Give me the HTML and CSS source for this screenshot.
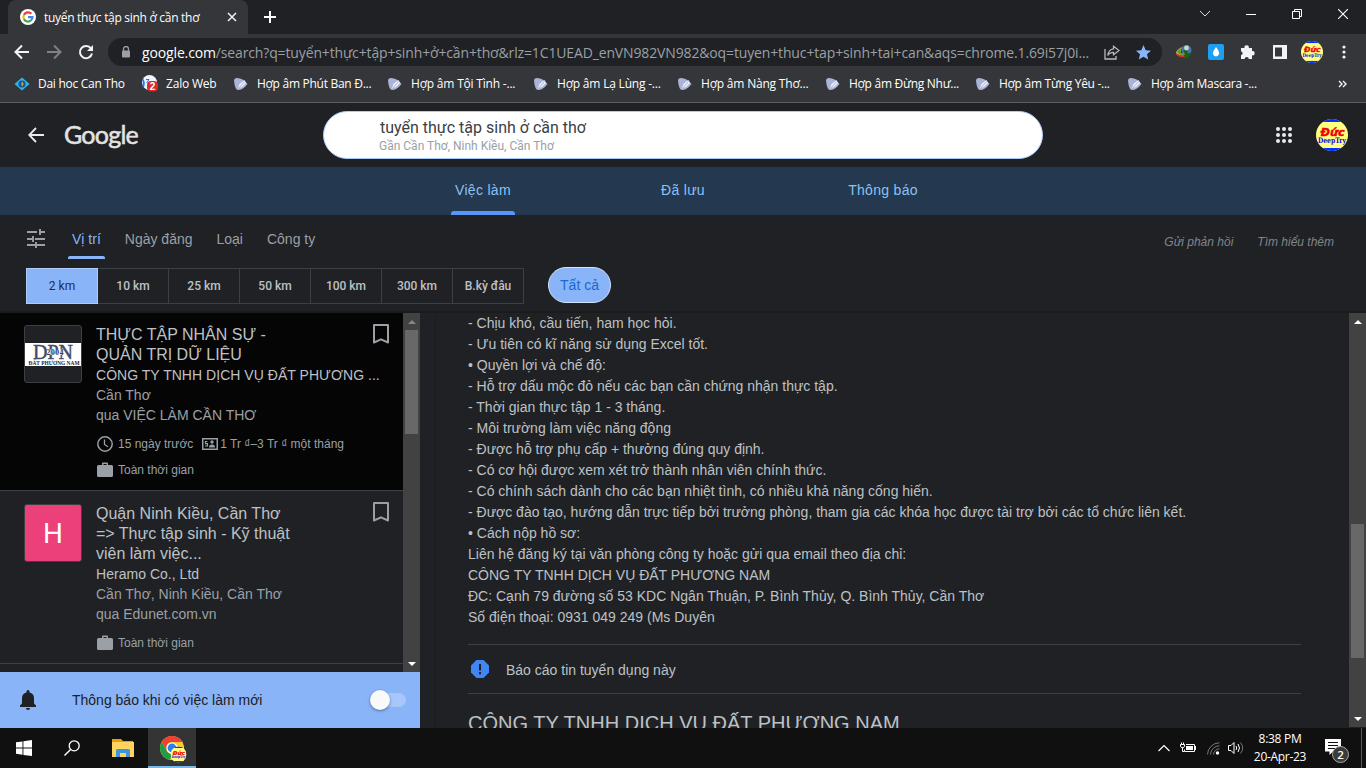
FILE: index.html
```html
<!DOCTYPE html>
<html lang="vi">
<head>
<meta charset="utf-8">
<title>tuyển thực tập sinh ở cần thơ</title>
<link rel="stylesheet" href="styles.css">
</head>
<body>
<svg class="defs" aria-hidden="true">
  <defs>
    <symbol id="pick" viewBox="0 0 16 16"><path d="M1 5Q1 2 4 2Q10 2 14.500 8Q10 14 5 14Q2 14 1 5Z" fill="#a9b4d6"/><path d="M5 12.500L6.500 8L11.500 4L13 7L9 11Z" fill="#eef1fa"/><path d="M6 12L11.500 5.500" stroke="#8a95bd" stroke-width=".7"/></symbol>
    <symbol id="avatar" viewBox="0 0 32 32"><clipPath id="round"><circle cx="16" cy="16" r="16"/></clipPath><g clip-path="url(#round)"><rect width="32" height="32" fill="#ffff80"/><rect width="32" height="3" fill="#0030ff"/><rect y="29" width="32" height="3" fill="#0030ff"/><text x="4.500" y="16.500" textLength="24" lengthAdjust="spacingAndGlyphs" font-family="DejaVu Sans" font-size="10.500" font-weight="700" font-style="italic" fill="#f00000" stroke="#f00000" stroke-width=".4">Đức</text><text x="2" y="23.500" textLength="28" lengthAdjust="spacingAndGlyphs" font-family="DejaVu Serif" font-size="7.500" font-weight="700" fill="#2000f0">DeepTry</text></g></symbol>
    <symbol id="case" viewBox="0 0 16 16"><path d="M5 3V1.500Q5 .5 6 .5H10Q11 .5 11 1.500V3H14.500Q16 3 16 4.500V13.500Q16 15 14.500 15H1.500Q0 15 0 13.500V4.500Q0 3 1.500 3ZM6.500 3H9.500V2H6.500Z" fill="#9aa0a6" fill-rule="evenodd"/></symbol>
    <symbol id="mark" viewBox="0 0 16 20"><path d="M1 1H15V18.500L8 15.300L1 18.500Z" fill="none" stroke="#9aa0a6" stroke-width="2" stroke-linejoin="round"/></symbol>
  </defs>
</svg>

<div class="strip">
  <div class="tab">
    <svg class="fav" width="16" height="16" viewBox="0 0 16 16"><circle cx="8" cy="8" r="8" fill="#fff"/><g fill="none" stroke-width="2.200"><path d="M11.400 4.800A4.600 4.600 0 0 0 3.900 6" stroke="#ea4335"/><path d="M3.900 6A4.600 4.600 0 0 0 3.900 10.100" stroke="#fbbc05"/><path d="M3.900 10.100A4.600 4.600 0 0 0 10.900 11.500" stroke="#34a853"/><path d="M8 8.100H12.500A4.600 4.600 0 0 1 10.900 11.500" stroke="#4285f4"/></g></svg>
    <span class="tab-title">tuyển thực tập sinh ở cần thơ</span>
    <svg class="tab-x" width="10" height="10" viewBox="0 0 10 10"><path d="M1 1L9 9M9 1L1 9" stroke="#f1f3f4" stroke-width="1.500"/></svg>
  </div>
  <svg class="plus" width="12" height="12" viewBox="0 0 12 12"><path d="M6 0V12M0 6H12" stroke="#fff" stroke-width="2"/></svg>
  <div class="win">
    <svg width="12" height="12" viewBox="0 0 12 12"><path d="M1 3L6 8L11 3" fill="none" stroke="#ddd"/></svg>
    <svg width="10" height="12" viewBox="0 0 10 12"><path d="M0 6.500H10" stroke="#fff"/></svg>
    <svg width="10" height="10" viewBox="0 0 10 10"><path d="M.5 2.500H7.500V9.500H.5ZM2.500 2.500V.5H9.500V7.500H7.500" fill="none" stroke="#fff"/></svg>
    <svg width="10" height="10" viewBox="0 0 10 10"><path d="M0 0L10 10M10 0L0 10" stroke="#fff" stroke-width="1.100"/></svg>
  </div>
</div>

<div class="toolbar">
  <svg class="nav-back" width="16" height="16" viewBox="0 0 16 16"><path d="M15 8H2M8 1.500L1.500 8L8 14.500" fill="none" stroke="#f1f3f4" stroke-width="2"/></svg>
  <svg class="nav-fwd" width="16" height="16" viewBox="0 0 16 16"><path d="M1 8H14M8 1.500L14.500 8L8 14.500" fill="none" stroke="#808184" stroke-width="2"/></svg>
  <svg class="nav-load" width="16" height="16" viewBox="0 0 16 16"><path d="M13 4.500A6.100 6.100 0 1 0 14 9.500" fill="none" stroke="#f1f3f4" stroke-width="2"/><path d="M15 1V7H9Z" fill="#f1f3f4"/></svg>
  <div class="omni">
    <svg width="10" height="12" viewBox="0 0 10 12"><path d="M2.500 5V3A2.500 2.500 0 0 1 7.500 3V5" fill="none" stroke="#9aa0a6" stroke-width="1.300"/><rect x="1" y="4.500" width="8" height="7" rx="1" fill="#9aa0a6"/></svg>
    <span class="url"><b>google.com</b>/search?q=tuyển+thực+tập+sinh+ở+cần+thơ&amp;rlz=1C1UEAD_enVN982VN982&amp;oq=tuyen+thuc+tap+sinh+tai+can&amp;aqs=chrome.1.69i57j0i...</span>
    <svg class="share" width="16" height="15" viewBox="0 0 16 15"><path d="M1 4V14H12V11" fill="none" stroke="#b8babd" stroke-width="1.300"/><path d="M9.500 1.200L15 5.500L9.500 9.800V7.300Q5.500 7.300 3.800 10.500Q4.500 4.500 9.500 3.800Z" fill="none" stroke="#b8babd" stroke-width="1.200"/></svg>
    <svg width="15" height="15" viewBox="0 0 15 15"><path d="M7.500 0L9.700 5.200L15 5.700L11 9.200L12.200 14.500L7.500 11.700L2.800 14.500L4 9.200L0 5.700L5.300 5.200Z" fill="#8ab4f8"/></svg>
  </div>
  <div class="ext">
    <svg width="16" height="16" viewBox="0 0 16 16"><circle cx="10.500" cy="6" r="5" fill="#4a72ad"/><circle cx="10.500" cy="4" r="2.400" fill="#c9dcc9"/><path d="M6 3Q0 6 0 9Q1 13 9 12L8 9.500Q5 10 4.500 8Z" fill="#e0b02a"/><path d="M0 9Q2 14.500 10 13L9 11Q4 12 0 9Z" fill="#d2352e"/><path d="M1 7.500Q3 5 5 4L4.500 8Q5 10 8 9.500V11Q3 11.500 1 7.500Z" fill="#5a9a35"/><path d="M7 6.500H11L12 9.500L16 8.500L11 15.500L7.500 11H9.500Z" fill="#14650c"/></svg>
    <svg width="16" height="16" viewBox="0 0 16 16"><rect width="16" height="16" rx="2" fill="#1ca0f2"/><path d="M8 3Q12 8 11 10.300A3.200 3.200 0 0 1 5 10.300Q4.300 8 8 3Z" fill="#fff"/></svg>
    <svg width="16" height="16" viewBox="0 0 16 16"><path d="M1 4H4.500A2.200 2.200 0 1 1 8.800 4H12V7A2.200 2.200 0 1 1 12 11.300V15H8.800A2.100 2.100 0 0 0 4.600 15H1V11.300A2.100 2.100 0 0 0 1 7.200Z" fill="#f1f3f4"/></svg>
    <svg width="14" height="14" viewBox="0 0 14 14"><path d="M0 0H14V14H0ZM2 2.500V11.500H9V2.500Z" fill="#f1f3f4" fill-rule="evenodd"/></svg>
    <svg width="22" height="22"><use href="#avatar"/></svg>
    <svg width="4" height="14" viewBox="0 0 4 14"><g fill="#f1f3f4"><circle cx="2" cy="2" r="1.600"/><circle cx="2" cy="7" r="1.600"/><circle cx="2" cy="12" r="1.600"/></g></svg>
  </div>
</div>

<div class="bookmarks">
  <span class="bm"><svg width="16" height="16" viewBox="0 0 16 16"><path d="M8 1.500L15.500 8L8 14.500L.5 8Z" fill="#2fb6e3"/><circle cx="8" cy="8" r="3.600" fill="#14549b"/><path d="M8 5.500Q11 8 8 10.500Q6.500 8 8 5.500Z" fill="#d2a44c"/></svg><span>Dai hoc Can Tho</span></span>
  <span class="bm"><svg width="17" height="17" viewBox="0 0 17 17"><circle cx="7.500" cy="7.500" r="7.500" fill="#eef4ff"/><path d="M.5 4Q3 8 1 12" stroke="#2577e8" stroke-width="1.800" fill="none"/><path d="M4 4.500H7L4.500 8" stroke="#2577e8" fill="none"/><rect x="5" y="6" width="11" height="10.500" rx="4" fill="#d92b2b"/><text x="10.500" y="15" text-anchor="middle" font-family="Liberation Sans" font-size="10" font-weight="700" fill="#fff">2</text></svg><span>Zalo Web</span></span>
  <span class="bm"><svg width="16" height="16"><use href="#pick"/></svg><span>Hợp âm Phút Ban Đ...</span></span>
  <span class="bm"><svg width="16" height="16"><use href="#pick"/></svg><span>Hợp âm Tội Tình -...</span></span>
  <span class="bm"><svg width="16" height="16"><use href="#pick"/></svg><span>Hợp âm Lạ Lùng -...</span></span>
  <span class="bm"><svg width="16" height="16"><use href="#pick"/></svg><span>Hợp âm Nàng Thơ...</span></span>
  <span class="bm"><svg width="16" height="16"><use href="#pick"/></svg><span>Hợp âm Đừng Như...</span></span>
  <span class="bm"><svg width="16" height="16"><use href="#pick"/></svg><span>Hợp âm Từng Yêu -...</span></span>
  <span class="bm"><svg width="16" height="16"><use href="#pick"/></svg><span>Hợp âm Mascara -...</span></span>
  <svg class="more" width="9" height="8" viewBox="0 0 9 8"><path d="M1 1L4 4L1 7M5 1L8 4L5 7" fill="none" stroke="#f1f3f4" stroke-width="1.400"/></svg>
</div>

<header class="head">
  <svg class="h-back" width="16" height="16" viewBox="0 0 16 16"><path d="M16 8H1.500M8 1L1.200 8L8 15" fill="none" stroke="#e8eaed" stroke-width="1.800"/></svg>
  <span class="logo">Google</span>
  <div class="search">
    <div class="query">tuyển thực tập sinh ở cần thơ</div>
    <div class="near">Gần Cần Thơ, Ninh Kiều, Cần Thơ</div>
  </div>
  <svg class="apps" width="16" height="16" viewBox="0 0 16 16"><g fill="#e8eaed"><circle cx="2" cy="2" r="2"/><circle cx="8" cy="2" r="2"/><circle cx="14" cy="2" r="2"/><circle cx="2" cy="8" r="2"/><circle cx="8" cy="8" r="2"/><circle cx="14" cy="8" r="2"/><circle cx="2" cy="14" r="2"/><circle cx="8" cy="14" r="2"/><circle cx="14" cy="14" r="2"/></g></svg>
  <svg class="me" width="32" height="32"><use href="#avatar"/></svg>
</header>

<nav class="tabs">
  <a class="on">Việc làm</a><a>Đã lưu</a><a>Thông báo</a>
</nav>

<section class="filters">
  <div class="frow">
    <svg class="tune" width="20" height="20" viewBox="0 0 20 20"><path d="M1 3H11M13 3H19M14 0V6M1 10H7M9 10H19M7 7V13M1 16H9M9 16H19M10 13V19" fill="none" stroke="#9aa0a6" stroke-width="1.900"/></svg>
    <a class="f f-on">Vị trí</a><a class="f">Ngày đăng</a><a class="f">Loại</a><a class="f">Công ty</a>
    <span class="fb">Gửi phản hồi</span><span class="fb">Tìm hiểu thêm</span>
  </div>
  <div class="ranges">
    <span class="r r-on">2 km</span><span class="r">10 km</span><span class="r">25 km</span><span class="r">50 km</span><span class="r">100 km</span><span class="r">300 km</span><span class="r">B.kỳ đâu</span>
    <span class="all">Tất cả</span>
  </div>
</section>

<main class="main">
  <div class="left">
    <div class="listwrap">
      <div class="list">
        <article class="job sel">
          <div class="thumb"><svg width="56" height="23" viewBox="0 0 56 23"><rect width="56" height="23" fill="#fff"/><text x="8" y="15.500" textLength="40" lengthAdjust="spacingAndGlyphs" font-family="Liberation Serif" font-size="20" fill="#424b68" stroke="#424b68" stroke-width=".4">DPN</text><rect x="22" y="6.500" width="16" height="5.500" fill="#fff" opacity=".7"/><text x="21.500" y="12" textLength="17" font-family="Liberation Serif" font-size="7.500" font-weight="700" fill="#333c58">2004</text><text x="3.500" y="21.800" textLength="51" lengthAdjust="spacingAndGlyphs" font-family="Liberation Serif" font-size="5.500" font-weight="700" fill="#20263c">ĐẤT PHƯƠNG NAM</text></svg></div>
          <div class="info">
            <h3>THỰC TẬP NHÂN SỰ -<br>QUẢN TRỊ DỮ LIỆU</h3>
            <div class="co">CÔNG TY TNHH DỊCH VỤ ĐẤT PHƯƠNG ...</div>
            <div class="sub">Cần Thơ</div>
            <div class="sub">qua VIỆC LÀM CẦN THƠ</div>
            <div class="meta"><svg width="16" height="16" viewBox="0 0 16 16"><circle cx="8" cy="8" r="7.200" fill="none" stroke="#9aa0a6" stroke-width="1.500"/><path d="M7.500 3.500V8.500L11 10.700" fill="none" stroke="#9aa0a6" stroke-width="1.300"/></svg><span class="m1">15 ngày trước</span><svg class="card" width="16" height="12" viewBox="0 0 16 12"><path d="M0 0H16V12H0ZM1.500 1.500V10.500H14.500V1.500Z" fill="#9aa0a6" fill-rule="evenodd"/><path d="M5.500 3.500H3.500V5.700H5.500V8H3" fill="none" stroke="#9aa0a6" stroke-width="1.200"/><circle cx="10" cy="4" r="1.700" fill="#9aa0a6"/><path d="M7 9.500Q7 6.500 10 6.500Q13 6.500 13 9.500Z" fill="#9aa0a6"/></svg><span class="m2">1 Tr ₫–3 Tr ₫ một tháng</span></div>
            <div class="meta"><svg width="16" height="16"><use href="#case"/></svg><span>Toàn thời gian</span></div>
          </div>
          <svg class="bk" width="16" height="20"><use href="#mark"/></svg>
        </article>
        <article class="job">
          <div class="thumb pink">H</div>
          <div class="info">
            <h3>Quận Ninh Kiều, Cần Thơ<br>=&gt; Thực tập sinh - Kỹ thuật<br>viên làm việc...</h3>
            <div class="co">Heramo Co., Ltd</div>
            <div class="sub">Cần Thơ, Ninh Kiều, Cần Thơ</div>
            <div class="sub">qua Edunet.com.vn</div>
            <div class="meta"><svg width="16" height="16"><use href="#case"/></svg><span>Toàn thời gian</span></div>
          </div>
          <svg class="bk" width="16" height="20"><use href="#mark"/></svg>
        </article>
      </div>
      <div class="sb sb-l"><i class="up dim"></i><b></b><i class="down"></i></div>
    </div>
    <div class="alert">
      <svg width="16" height="20" viewBox="0 0 16 20"><path d="M0 17V15.500L2 13.500V8Q2 3.500 6.500 2.500V1.500A1.500 1.500 0 0 1 9.500 1.500V2.500Q14 3.500 14 8V13.500L16 15.500V17ZM6 18H10Q10 20 8 20Q6 20 6 18Z" fill="#202124"/></svg>
      <span>Thông báo khi có việc làm mới</span>
      <div class="switch"></div>
    </div>
  </div>
  <div class="detail">
    <div class="card-body">
      <div class="text">
        <p>- Chịu khó, cầu tiến, ham học hỏi.</p>
        <p>- Ưu tiên có kĩ năng sử dụng Excel tốt.</p>
        <p>• Quyền lợi và chế độ:</p>
        <p>- Hỗ trợ dấu mộc đỏ nếu các bạn cần chứng nhận thực tập.</p>
        <p>- Thời gian thực tập 1 - 3 tháng.</p>
        <p>- Môi trường làm việc năng động</p>
        <p>- Được hỗ trợ phụ cấp + thưởng đúng quy định.</p>
        <p>- Có cơ hội được xem xét trở thành nhân viên chính thức.</p>
        <p>- Có chính sách dành cho các bạn nhiệt tình, có nhiều khả năng cống hiến.</p>
        <p>- Được đào tạo, hướng dẫn trực tiếp bởi trưởng phòng, tham gia các khóa học được tài trợ bởi các tổ chức liên kết.</p>
        <p>• Cách nộp hồ sơ:</p>
        <p>Liên hệ đăng ký tại văn phòng công ty hoặc gửi qua email theo địa chỉ:</p>
        <p>CÔNG TY TNHH DỊCH VỤ ĐẤT PHƯƠNG NAM</p>
        <p>ĐC: Cạnh 79 đường số 53 KDC Ngân Thuận, P. Bình Thủy, Q. Bình Thủy, Cần Thơ</p>
        <p>Số điện thoại: 0931 049 249 (Ms Duyên</p>
      </div>
      <div class="report"><svg width="18" height="18" viewBox="0 0 18 18"><path d="M5.500 0H12.500L18 5.500V12.500L12.500 18H5.500L0 12.500V5.500Z" fill="#4285f4"/><path d="M9 4V10.500M9 12V14.200" stroke="#202124" stroke-width="2"/></svg><span>Báo cáo tin tuyển dụng này</span></div>
      <h2>CÔNG TY TNHH DỊCH VỤ ĐẤT PHƯƠNG NAM</h2>
    </div>
    <div class="sb sb-r"><i class="up"></i><b></b><i class="down"></i></div>
  </div>
</main>

<footer class="taskbar">
  <svg class="start" width="16" height="16" viewBox="0 0 16 16"><path d="M0 2.300L6.500 1.400V7.600H0ZM7.400 1.200L16 0V7.600H7.400ZM0 8.500H6.500V14.700L0 13.800ZM7.400 8.500H16V16L7.400 14.900Z" fill="#fff"/></svg>
  <svg class="find" width="16" height="16" viewBox="0 0 16 16"><circle cx="10.200" cy="5.800" r="5" fill="none" stroke="#fff" stroke-width="1.300"/><path d="M6.600 9.400L.5 15.500" stroke="#fff" stroke-width="1.400"/></svg>
  <svg class="folder" width="22" height="18" viewBox="0 0 22 18"><path d="M0 0H9L11 2H21V5H0Z" fill="#e5a00d"/><rect y="3" width="22" height="15" fill="#ffd35e"/><path d="M4 18V11.500Q4 10 5.500 10H16.500Q18 10 18 11.500V18H14V14H8V18Z" fill="#3a96dd"/></svg>
  <div class="app">
    <svg width="27" height="27" viewBox="0 0 27 27"><circle cx="12" cy="12" r="12" fill="#fcc934"/><path d="M1.600 6A12 12 0 0 1 22.400 6H12A6 6 0 0 0 6.800 9L6.800 15Z" fill="#ea4335"/><path d="M1.600 6L6.800 15A6 6 0 0 0 12 18L10 23.800A12 12 0 0 1 1.600 6Z" fill="#1e9e4a"/><circle cx="12" cy="12" r="5.600" fill="#fff"/><circle cx="12" cy="12" r="4.400" fill="#2d7ff0"/><use href="#avatar" x="10.500" y="10.500" width="16" height="16"/></svg>
  </div>
  <div class="tray">
    <svg class="t-up" width="12" height="8" viewBox="0 0 12 8"><path d="M.5 7L6 1.500L11.500 7" fill="none" stroke="#fff" stroke-width="1.200"/></svg>
    <svg class="t-bat" width="16" height="12" viewBox="0 0 16 12"><path d="M6 2.500H14.500V9.500H4.500V7.500" fill="none" stroke="#fff"/><path d="M6 4H13V8H6ZM15 4H16V8H15Z" fill="#fff"/><path d="M.5 2.500H4.500V4.500Q4.500 5.500 2.500 5.500Q.5 5.500 .5 4.500ZM1.500 2.500V.5M3.500 2.500V.5M2.500 5.500V9.500H4" fill="none" stroke="#fff"/></svg>
    <svg class="t-wifi" width="13" height="13" viewBox="0 0 13 13"><g fill="none" stroke="#777"><path d="M.5 12.500A12 12 0 0 1 12.500 .8M3.500 12.500A9 9 0 0 1 12.500 3.800M6.500 12.500A6 6 0 0 1 12.500 6.800"/></g><circle cx="10.500" cy="11" r="1.700" fill="#fff"/></svg>
    <svg class="t-vol" width="16" height="14" viewBox="0 0 16 14"><path d="M.5 4.500H3L6 1.500V12.500L3 9.500H.5Z" fill="none" stroke="#fff"/><path d="M8 5Q9.500 7 8 9M10 3Q13 7 10 11" fill="none" stroke="#fff"/><path d="M12.500 1.500Q17 7 12.500 12.500" fill="none" stroke="#777"/></svg>
    <div class="clock"><span>8:38 PM</span><span>20-Apr-23</span></div>
    <svg class="note" width="25" height="25" viewBox="0 0 25 25"><path d="M0 0H16V12.500H8L4.500 16V12.500H0Z" fill="#fff"/><path d="M3 3.500H13M3 6.500H13M3 9.500H10" stroke="#101010"/><circle cx="15.500" cy="15.500" r="8" fill="#3b3b3b" stroke="#aaa"/><text x="15.500" y="19.500" text-anchor="middle" font-family="Open Sans" font-size="11.500" font-weight="600" fill="#fff">2</text></svg>
    <i class="peek"></i>
  </div>
</footer>
</body>
</html>
```
FILE: styles.css
```css
* { box-sizing: border-box; }
body { margin: 0; width: 1366px; height: 768px; overflow: hidden; background: #202124; font-family: "Liberation Sans", Arial, sans-serif; color: #bdc1c6; }
svg { display: block; flex: none; }
.defs { position: absolute; width: 0; height: 0; }
span, a, p, h2, h3 { white-space: nowrap; }

.strip { height: 34px; display: flex; align-items: center; background: #202124; font-family: "Open Sans", "Noto Sans", sans-serif; }
.tab { margin-left: 8px; width: 240px; height: 34px; padding: 0 11px 0 12px; display: flex; align-items: center; background: #35363a; border-radius: 8px 8px 0 0; }
.tab-title { margin-left: 8px; font-size: 12px; letter-spacing: -.29px; color: #fff; }
.tab-x { margin-left: auto; }
.plus { margin-left: 16px; }
.win { align-self: flex-start; margin-left: auto; width: 184px; height: 28px; display: grid; grid-template-columns: repeat(4, 46px); place-items: center; }

.toolbar { height: 36px; display: flex; align-items: center; background: #35363a; }
.nav-back { margin-left: 14px; }
.nav-fwd { margin-left: 16px; }
.nav-load { margin-left: 16px; }
.omni { margin-left: 14px; width: 1054px; height: 28px; border-radius: 14px; padding: 0 11px 0 13px; display: flex; align-items: center; background: #202124; font: 14px "Open Sans", "Noto Sans", sans-serif; }
.url { margin-left: 11px; width: 962px; color: #9aa0a6; letter-spacing: -.14px; }
.url b { font-weight: 400; color: #fff; }
.share { margin-right: 16px; }
.ext { margin-left: 6px; width: 192px; display: grid; grid-template-columns: repeat(6, 32px); place-items: center; }

.bookmarks { height: 33px; padding: 0 19px 5px 14px; display: flex; align-items: center; background: #35363a; border-bottom: 1px solid #5b5c60; font: 12px "Open Sans", "Noto Sans", sans-serif; color: #fff; }
.bm { display: flex; align-items: center; gap: 8px; width: 148px; letter-spacing: -.28px; }
.bm:nth-child(1) { width: 128px; }
.bm:nth-child(2) { width: 91px; gap: 7px; letter-spacing: -.2px; }
.bm:nth-child(3) { width: 154px; }
.bm:nth-child(4) { width: 146px; }
.bm:nth-child(4), .bm:nth-child(5), .bm:nth-child(6) { letter-spacing: -.2px; }
.bm:nth-child(5) { width: 144px; }
.bm:nth-child(7) { width: 150px; }
.bm:nth-child(8) { width: 152px; }
.more { margin-left: auto; }

.head { height: 64px; display: flex; align-items: center; background: #202124; }
.h-back { margin-left: 28px; }
.logo { margin: -2px 0 0 20px; width: 75px; font: 25px Lato, sans-serif; letter-spacing: -.75px; -webkit-text-stroke: .5px #e3e3e3; color: #e3e3e3; }
.search { margin-left: 184px; width: 720px; height: 48px; padding: 6px 0 0 56px; border: 1px solid #a8cbfa; border-radius: 24px; background: #fff; font-family: Roboto, sans-serif; }
.query { font-size: 16px; line-height: 20px; color: #3c4043; }
.near { margin-left: -1px; font-size: 12px; line-height: 16px; color: #9aa0a6; }
.apps { margin-left: 233px; }
.me { margin-left: 24px; }

.tabs { height: 48px; display: flex; justify-content: center; background: #24384f; font-size: 14px; line-height: 46px; letter-spacing: .3px; color: #8ac2f5; }
.tabs a { width: 64px; height: 48px; text-align: center; position: relative; }
.tabs a:nth-child(2) { margin: 0 133px 0 136px; }
.tabs a:nth-child(3) { width: 70px; margin-right: -3px; }
.tabs .on::after { content: ""; position: absolute; left: 0; right: 0; bottom: 0; height: 4px; border-radius: 3px 3px 0 0; background: #5795fa; }

.filters { height: 98px; background: #202124; border-bottom: 2px solid #1a1b1d; }
.frow { height: 48px; padding: 0 32px 0 26px; display: flex; align-items: center; }
.f { height: 40px; margin: 0 0 0 24px; line-height: 40px; font-size: 14px; color: #9aa0a6; }
.tune { margin-right: -2px; }
.f-on { padding: 0 4px; margin-right: -4px; position: relative; color: #8ab4f8; }
.f-on::after { content: ""; position: absolute; left: 0; right: 0; bottom: 0; height: 3px; border-radius: 2px 2px 0 0; background: #8ab4f8; }
.fb { margin: 5px 0 0 24px; font-size: 12px; font-style: italic; color: #80868b; }
.f + .fb { margin-left: auto; }
.ranges { margin-top: 4px; padding-left: 26px; display: flex; align-items: flex-start; }
.r { margin-top: 1px; width: 71px; height: 36px; border: 1px solid #3c4043; border-left: 0; text-align: center; font: 500 12px/34px Roboto, sans-serif; color: #bdc1c6; }
.r-on { width: 72px; background: #8ab4f8; border: 1px solid #aecbfa; color: #202b4d; font-weight: 400; }
.all { margin-left: 24px; width: 63px; height: 36px; border: 1px solid #d2e3fc; border-radius: 18px; background: #8ab4f8; text-align: center; font-size: 14px; line-height: 34px; color: #1967d2; }

.main { height: 415px; display: flex; }
.left { width: 420px; }
.listwrap { height: 359px; display: flex; overflow: hidden; }
.list { width: 403px; }
.job { display: flex; padding: 12px 14px 0 24px; border-bottom: 1px solid #3c4043; height: 173px; }
.sel { background: #050505; height: 178px; }
.thumb { width: 58px; height: 58px; border: 1px solid #3c4043; border-radius: 3px; display: flex; align-items: center; justify-content: center; background: #202124; flex: none; }
.pink { margin-top: 1px; background: #ec407a; color: #fff; font: 28px Roboto, sans-serif; }
.info { margin-left: 14px; width: 277px; flex: none; }
h3 { margin: 0; font-size: 16px; line-height: 20px; font-weight: 400; color: #bdc1c6; }
.co { font-size: 14px; line-height: 20px; color: #bdc1c6; white-space: nowrap; letter-spacing: .03px; }
.sub { font-size: 14px; line-height: 20px; color: #9aa0a6; }
.job:nth-child(2) .info { margin-top: 1px; }
.meta { margin: 10px 0 0 1px; height: 16px; display: flex; align-items: center; font-size: 12px; color: #9aa0a6; gap: 5px; white-space: nowrap; }
.sub + .meta { margin-top: 11px; }
.bk { margin-top: -1px; }
.job .m1 { margin-right: 4px; }
.job .card { margin-right: -3px; }

.sb { width: 17px; background: #424242; display: flex; flex-direction: column; align-items: center; }
.sb b { width: 13px; background: #686868; }
.sb i { width: 17px; height: 17px; display: flex; align-items: center; justify-content: center; }
.sb i::before { content: ""; border: 4px solid transparent; }
.sb .up::before { border-bottom-color: #fff; border-top: 0; }
.sb .down::before { border-top-color: #fff; border-bottom: 0; }
.sb .dim::before { border-bottom-color: #868686; }
.sb-l b { height: 104px; }
.sb i:last-child { margin-top: auto; }
.sb-r { height: 414px; }
.sb-r b { height: 134px; margin-top: 194px; }

.alert { height: 56px; padding: 0 14px 0 20px; display: flex; align-items: center; background: #8ab4f8; color: #202124; font-size: 14px; }
.alert span { margin-left: 36px; }
.switch { margin-left: auto; width: 34px; height: 14px; border-radius: 7px; background: #a7c6fa; display: flex; align-items: center; }
.switch::before { content: ""; width: 20px; height: 20px; margin-left: -2px; border-radius: 50%; background: #f8f9fa; box-shadow: 0 1px 3px rgba(0,0,0,.4); flex: none; }

.detail { flex: 1; display: flex; overflow: hidden; }
.card-body { width: 914px; margin-left: 15px; padding: 0 48px 0 32px; border-left: 1px solid #1b1c1f; overflow: hidden; }
.text { height: 332px; border-bottom: 1px solid #3c4043; font-size: 14px; }
.text p { margin: 0; line-height: 21px; height: 21px; }
.report { height: 49px; padding-left: 3px; display: flex; align-items: center; gap: 17px; border-bottom: 1px solid #3c4043; font-size: 14px; }
.report span { padding-top: 2px; }
h2 { margin: 17px 0 0; font-size: 20px; line-height: 24px; font-weight: 400; }

.taskbar { height: 40px; display: flex; align-items: center; background: #101010; position: relative; }
.start { margin-left: 16px; }
.find { margin-left: 32px; }
.folder { margin-left: 32px; }
.app { margin-left: 14px; width: 48px; height: 40px; padding: 8px 0 0 12px; background: #343434; border-bottom: 2px solid #76b9ed; }
.tray { margin-left: auto; width: 208px; height: 40px; display: flex; align-items: center; }
.t-bat { margin-left: 10px; }
.t-wifi { margin-left: 11px; }
.t-vol { margin-left: 8px; }
.clock { margin-left: 8px; width: 56px; display: flex; flex-direction: column; align-items: center; font: 12px/18px "Open Sans", "Noto Sans", sans-serif; color: #fff; letter-spacing: -.3px; }
.note { margin: 6px 0 0 17px; }
.peek { margin-left: auto; margin-right: 4px; width: 1px; height: 40px; background: #5a5a5a; }
```
